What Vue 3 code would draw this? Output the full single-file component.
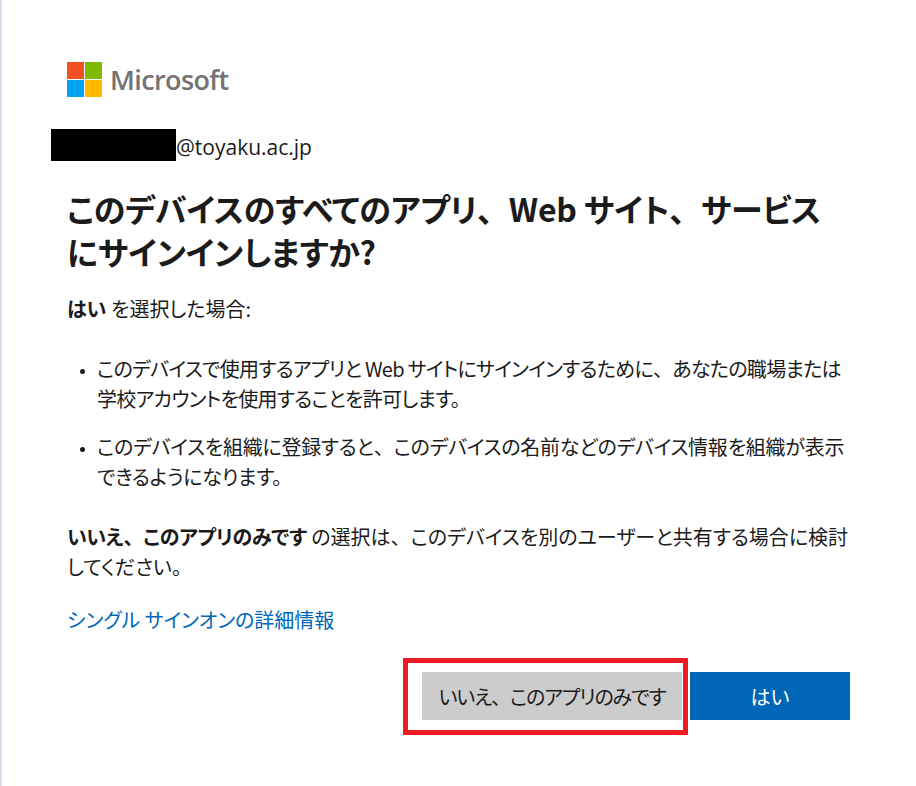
<script setup>
const bullets = [
  ["このデバイスで使用するアプリと Web サイトにサインインするために", "あなたの職場または学校アカウントを使用することを許可します。"],
  ["このデバイスを組織に登録すると", "このデバイスの名前などのデバイス情報を組織が表示できるようになります。"],
];
</script>

<template>
  <div class="page">
    <div class="logo">
      <svg width="35" height="35" viewBox="0 0 35 35">
        <rect x="0" y="0" width="17" height="17" fill="#f25022" />
        <rect x="18" y="0" width="17" height="17" fill="#7fba00" />
        <rect x="0" y="18" width="17" height="17" fill="#00a4ef" />
        <rect x="18" y="18" width="17" height="17" fill="#ffb900" />
      </svg>
      <span class="logo-text">Microsoft</span>
    </div>

    <div class="account">
      <span class="redacted"></span><span class="email">@toyaku.ac.jp</span>
    </div>

    <h1 class="title">
      このデバイスのすべてのアプリ<span class="comma">、</span>Web サイト<span class="comma">、</span>サービス<br />にサインインしますか?
    </h1>

    <p class="lead"><b>はい</b> を選択した場合:</p>

    <ul class="list">
      <li v-for="item in bullets" :key="item[0]">
        {{ item[0] }}<span class="comma">、</span>{{ item[1] }}
      </li>
    </ul>

    <p class="note">
      <b>いいえ<span class="comma">、</span>このアプリのみです</b> の選択は<span class="comma">、</span>このデバイスを別のユーザーと共有する場合に検討してください。
    </p>

    <a class="link" href="#">シングル サインオンの詳細情報</a>

    <div class="buttons">
      <button class="btn btn-gray">いいえ<span class="comma">、</span>このアプリのみです</button>
      <button class="btn btn-blue">はい</button>
      <div class="highlight"></div>
    </div>
  </div>
</template>

<style>
html,
body {
  margin: 0;
  background: #fff;
}
</style>

<style scoped>
.page {
  box-sizing: border-box;
  width: 916px;
  height: 786px;
  overflow: hidden;
  padding: 62px 66px 0 65px;
  border-left: 2px solid #d5dfec;
  font-family: "Noto Sans CJK JP", "Noto Sans", sans-serif;
  font-feature-settings: "palt";
  color: #1b1b1b;
  font-size: 20px;
}

.comma {
  font-feature-settings: normal;
}

.logo {
  display: flex;
  align-items: center;
  gap: 8px;
  height: 35px;
}

.logo-text {
  font-family: "Open Sans", sans-serif;
  font-weight: 600;
  font-size: 27px;
  letter-spacing: -0.6px;
  color: #737373;
}

.account {
  display: flex;
  align-items: center;
  height: 32px;
  margin: 32px 0 0 -16px;
}

.email {
  padding-top: 4px;
  font-family: "Open Sans", sans-serif;
  font-size: 21px;
}

.redacted {
  width: 125px;
  height: 32px;
  background: #000;
}

.title {
  margin: 26px 0 0;
  font-size: 32px;
  line-height: 43px;
  font-weight: 600;
  letter-spacing: -0.2px;
}

.lead {
  margin: 21px 0 0;
  line-height: 30px;
}

.list {
  margin: 30px 0 0;
  padding: 0 0 0 30px;
  line-height: 30px;
  letter-spacing: -0.25px;
}

.list li:first-child {
  letter-spacing: -0.7px;
}

.list li::marker {
  font-size: 13px;
}

.list li + li {
  margin-top: 18px;
}

.note {
  margin: 30px 0 0;
  line-height: 30px;
}

.note b {
  letter-spacing: -0.3px;
}

.link {
  display: block;
  margin-top: 23px;
  line-height: 30px;
  color: #0067b8;
  text-decoration: none;
}

.buttons {
  position: relative;
  display: flex;
  justify-content: flex-end;
  gap: 8px;
  margin-top: 37px;
}

.btn {
  height: 48px;
  border: none;
  padding: 0;
  font-family: inherit;
  font-feature-settings: inherit;
  font-size: 20px;
}

.btn-gray {
  width: 260px;
  background: #ccc;
  color: #1b1b1b;
  letter-spacing: -1.1px;
}

.btn-blue {
  width: 160px;
  background: #0067b8;
  color: #fff;
}

.highlight {
  position: absolute;
  left: 336px;
  top: -14px;
  width: 285px;
  height: 77px;
  box-sizing: border-box;
  border: 5px solid #ed1c24;
}
</style>
